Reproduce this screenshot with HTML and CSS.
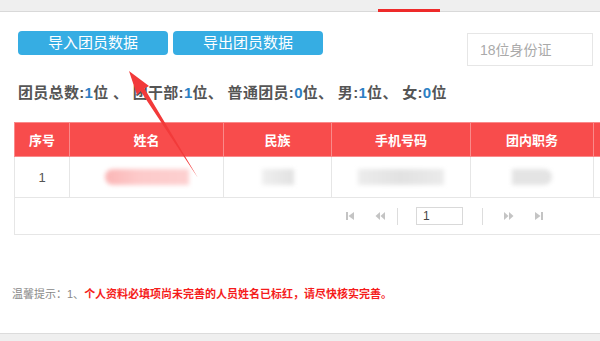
FILE: index.html
```html
<!DOCTYPE html>
<html lang="zh-CN">
<head>
    <meta charset="UTF-8">
    <meta name="viewport" content="width=device-width, initial-scale=1.0">
    <title>团员管理</title>
    <link rel="stylesheet" href="styles.css">
</head>
<body>
    <div class="topbar">
        <span class="tab-mark"></span>
    </div>

    <div class="panel">
        <div class="toolbar">
            <div class="actions">
                <button class="btn">导入团员数据</button>
                <button class="btn">导出团员数据</button>
            </div>
            <input class="id-search" type="text" placeholder="18位身份证">
        </div>

        <p class="stats">
            团员总数:<b>1</b>位 、 团干部:<b>1</b>位、 普通团员:<b>0</b>位、 男:<b>1</b>位、 女:<b>0</b>位
        </p>

        <table class="member-table">
            <thead>
                <tr>
                    <th class="col-no">序号</th>
                    <th class="col-name">姓名</th>
                    <th class="col-nation">民族</th>
                    <th class="col-phone">手机号码</th>
                    <th class="col-duty">团内职务</th>
                    <th class="col-more"></th>
                </tr>
            </thead>
            <tbody>
                <tr class="data-row">
                    <td>1</td>
                    <td><span class="blur blur-name"></span></td>
                    <td><span class="blur blur-nation"></span></td>
                    <td><span class="blur blur-phone"></span></td>
                    <td><span class="blur blur-duty"></span></td>
                    <td></td>
                </tr>
                <tr class="pager-row">
                    <td colspan="6">
                        <div class="pager">
                            <svg class="pg-icon" viewBox="0 0 10 10"><rect x="1" y="1" width="2" height="8"/><polygon points="9,1 9,9 3.5,5"/></svg>
                            <svg class="pg-icon pg-prev" viewBox="0 0 10 10"><polygon points="5,1 5,9 0.5,5"/><polygon points="10,1 10,9 5.5,5"/></svg>
                            <span class="pg-sep"></span>
                            <input class="pg-input" type="text" value="1">
                            <span class="pg-sep pg-sep-right"></span>
                            <svg class="pg-icon" viewBox="0 0 10 10"><polygon points="0,1 0,9 4.5,5"/><polygon points="5,1 5,9 9.5,5"/></svg>
                            <svg class="pg-icon" viewBox="0 0 10 10"><polygon points="1,1 1,9 6.5,5"/><rect x="7" y="1" width="2" height="8"/></svg>
                        </div>
                    </td>
                </tr>
            </tbody>
        </table>

        <p class="tip">温馨提示：1、<span class="tip-warn">个人资料必填项尚未完善的人员姓名已标红，请尽快核实完善。</span></p>
    </div>

    <div class="bottombar"></div>

    <svg class="arrow" width="600" height="341" viewBox="0 0 600 341">
        <polygon points="129,71 149,86 144.5,88.5 198,178 140.5,91 137,95" fill="#f23a3a"/>
    </svg>
</body>
</html>
```

FILE: styles.css
```css
body {
    margin: 0;
    width: 600px;
    height: 341px;
    overflow: hidden;
    position: relative;
    font-family: "Liberation Sans", "Noto Sans CJK SC", sans-serif;
    color: #555;
    background: #fff;
}
.topbar {
    height: 11px;
    background-color: #efefef;
    border-bottom: 1px solid #d9d9d9;
    display: flex;
    align-items: flex-end;
}
.tab-mark {
    display: block;
    width: 62px;
    height: 3px;
    margin-left: 378px;
    margin-bottom: -1px;
    background-color: #ee2a2a;
}
.panel {
    height: 321px;
    overflow: hidden;
}
.toolbar {
    display: flex;
    justify-content: space-between;
    align-items: flex-start;
    padding: 19px 7px 0 18px;
}
.actions {
    display: flex;
    gap: 5px;
}
.btn {
    width: 150px;
    height: 24px;
    padding: 0;
    border: none;
    border-radius: 4px;
    background-color: #36ade3;
    color: #fff;
    font-family: inherit;
    font-size: 15px;
    line-height: 24px;
}
.id-search {
    width: 126px;
    height: 33px;
    margin-top: 2px;
    box-sizing: border-box;
    border: 1px solid #e6e6e6;
    padding: 0 12px;
    font-family: inherit;
    font-size: 14px;
    outline: none;
}
.id-search::placeholder {
    color: #aaa;
}
.stats {
    margin: 17px 0 0 18px;
    font-size: 15px;
    font-weight: bold;
    letter-spacing: 0.3px;
    line-height: 20px;
    color: #555;
    white-space: nowrap;
}
.stats b {
    color: #2d7fc4;
}
.member-table {
    margin: 19px 0 0 14px;
    width: 680px;
    border-collapse: collapse;
    table-layout: fixed;
    font-size: 13px;
}
.member-table th,
.member-table td {
    border: 1px solid #e6e6e6;
    text-align: center;
    padding: 0;
}
.member-table th {
    height: 33px;
    background-color: #f84c4c;
    color: #fff;
    font-weight: bold;
    border-color: #fa8a8a;
}
.col-no { width: 54px; }
.col-name { width: 153px; }
.col-nation { width: 107px; }
.col-phone { width: 138px; }
.col-duty { width: 122px; }
.data-row td {
    height: 40px;
    color: #555;
}
.blur {
    display: inline-block;
    height: 16px;
    vertical-align: middle;
    filter: blur(2px);
}
.blur-name {
    width: 84px;
    background: linear-gradient(to right, #fbb6b6, #fdcaca 40%, #fdd0d0);
    border-radius: 8px 0 0 8px;
}
.blur-nation {
    width: 32px;
    background: linear-gradient(to right, #efefef, #e2e2e2);
}
.blur-phone {
    width: 86px;
    background: linear-gradient(to right, #ececec, #e2e2e2 50%, #ebebeb);
}
.blur-duty {
    width: 40px;
    background: #e4e4e4;
    border-radius: 0 8px 8px 0;
}
.pager-row td {
    height: 36px;
}
.pager {
    display: flex;
    align-items: center;
    padding-left: 330px;
}
.pg-icon {
    width: 10px;
    height: 10px;
    fill: #c4c4c4;
    margin-right: 20px;
}
.pg-prev {
    margin-right: 12px;
}
.pg-sep {
    width: 1px;
    height: 17px;
    background-color: #ddd;
    margin-right: 18px;
}
.pg-sep-right {
    margin-right: 21px;
}
.pg-input {
    width: 47px;
    height: 18px;
    box-sizing: border-box;
    border: 1px solid #d9d9d9;
    padding: 0 6px;
    margin-right: 19px;
    font-family: inherit;
    font-size: 12px;
    color: #444;
}
.tip {
    margin: 50px 0 0 12px;
    font-size: 11px;
    color: #888;
    white-space: nowrap;
}
.tip-warn {
    color: #f51c1c;
    font-weight: bold;
}
.bottombar {
    height: 8px;
    background-color: #efefef;
    border-top: 1px solid #dcdcdc;
}
.arrow {
    position: absolute;
    left: 0;
    top: 0;
    pointer-events: none;
}
```
